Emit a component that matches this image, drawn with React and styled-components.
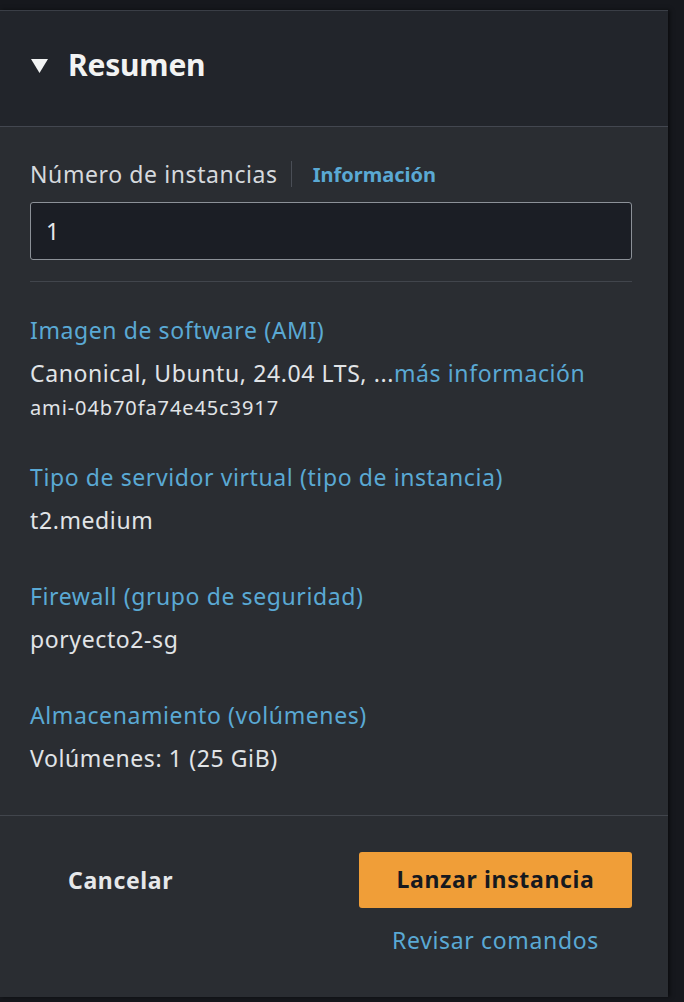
import React from "react";
import styled, { createGlobalStyle } from "styled-components";

const GlobalStyle = createGlobalStyle`
  html, body { margin: 0; padding: 0; background: #16181d; }
  body { font-family: "Noto Sans", "Open Sans", sans-serif; -webkit-font-smoothing: antialiased; }
  * { box-sizing: border-box; }
`;

const Page = styled.div`
  width: 684px;
  height: 1002px;
  padding-top: 10px;
  background: #16181d;
  overflow: hidden;
`;

const Panel = styled.section`
  width: 668px;
  height: 987px;
  background: #2a2d32;
  border-top: 1px solid #3a3e46;
  box-shadow: 2px 0 4px rgba(0, 0, 0, 0.5);
  display: flex;
  flex-direction: column;
`;

const Header = styled.header`
  height: 116px;
  background: #22252b;
  border-bottom: 1px solid #434750;
  display: flex;
  align-items: center;
  gap: 20px;
  padding: 0 0 8px 31px;
`;

const Caret = styled.svg`
  width: 17px;
  height: 14px;
  flex: none;
  margin-top: 2px;
`;

const Title = styled.h2`
  margin: 0;
  font-size: 30px;
  font-weight: 700;
  color: #f2f3f3;
  letter-spacing: -0.2px;
`;

const Body = styled.div`
  flex: 1;
  padding: 32px 36px 0 30px;
  display: flex;
  flex-direction: column;
  letter-spacing: 0.6px;
`;

const LabelRow = styled.div`
  display: flex;
  align-items: center;
  height: 30px;
`;

const Label = styled.span`
  font-size: 23px;
  color: #d5d9dd;
`;

const Sep = styled.span`
  width: 1px;
  height: 26px;
  background: #4a4e56;
  margin: 0 21px 0 13px;
`;

const InfoLink = styled.a`
  font-size: 20px;
  font-weight: 700;
  letter-spacing: 0;
  color: #5aa9d4;
  text-decoration: none;
`;

const Input = styled.div`
  margin-top: 13px;
  height: 58px;
  border: 1px solid #8c9198;
  border-radius: 3px;
  background: #1b1e25;
  display: flex;
  align-items: center;
  padding-left: 15px;
  font-size: 23px;
  color: #e6e8ea;
`;

const Divider = styled.hr`
  margin: 21px 0 0;
  border: 0;
  border-top: 1px solid #41454c;
`;

const Group = styled.div`
  display: flex;
  flex-direction: column;
  margin-top: ${(p) => p.$top}px;
`;

const Key = styled.span`
  font-size: 23px;
  line-height: 30px;
  color: #5aa9d4;
`;

const Value = styled.span`
  font-size: 23px;
  line-height: 30px;
  margin-top: 13px;
  color: #e1e4e7;
`;

const Inline = styled.span`
  color: #5aa9d4;
`;

const SubValue = styled.span`
  font-size: 20px;
  line-height: 26px;
  letter-spacing: 0.9px;
  margin-top: 7px;
  color: #e1e4e7;
`;

const Footer = styled.footer`
  height: 182px;
  border-top: 1px solid #41454c;
  display: grid;
  grid-template-columns: 1fr auto;
  padding: 36px 36px 0 68px;
  row-gap: 18px;
  align-content: start;
  letter-spacing: 0.65px;
`;

const Cancel = styled.button`
  background: none;
  border: 0;
  padding: 0;
  justify-self: start;
  align-self: center;
  font-family: inherit;
  letter-spacing: inherit;
  font-size: 23px;
  font-weight: 700;
  color: #e6e8ea;
  height: 54px;
`;

const Primary = styled.button`
  width: 273px;
  height: 56px;
  border: 0;
  border-radius: 3px;
  background: #f09e38;
  color: #16191f;
  font-family: inherit;
  letter-spacing: inherit;
  font-size: 23px;
  font-weight: 700;
  padding: 0 0 2px;
`;

const Review = styled.a`
  grid-column: 2;
  justify-self: center;
  font-size: 23px;
  line-height: 30px;
  margin-top: -1px;
  color: #5aa9d4;
  text-decoration: none;
`;

export default function App() {
  return (
    <>
      <GlobalStyle />
      <Page>
        <Panel>
          <Header>
            <Caret viewBox="0 0 17 14">
              <path d="M0 0 H17 L8.5 14 Z" fill="#f2f3f3" />
            </Caret>
            <Title>Resumen</Title>
          </Header>
          <Body>
            <LabelRow>
              <Label>Número de instancias</Label>
              <Sep />
              <InfoLink>Información</InfoLink>
            </LabelRow>
            <Input>1</Input>
            <Divider />
            <Group $top={33}>
              <Key>Imagen de software (AMI)</Key>
              <Value>
                Canonical, Ubuntu, 24.04 LTS, ...<Inline>más información</Inline>
              </Value>
              <SubValue>ami-04b70fa74e45c3917</SubValue>
            </Group>
            <Group $top={41}>
              <Key>Tipo de servidor virtual (tipo de instancia)</Key>
              <Value>t2.medium</Value>
            </Group>
            <Group $top={46}>
              <Key>Firewall (grupo de seguridad)</Key>
              <Value>poryecto2-sg</Value>
            </Group>
            <Group $top={46}>
              <Key>Almacenamiento (volúmenes)</Key>
              <Value>Volúmenes: 1 (25 GiB)</Value>
            </Group>
          </Body>
          <Footer>
            <Cancel>Cancelar</Cancel>
            <Primary>Lanzar instancia</Primary>
            <Review>Revisar comandos</Review>
          </Footer>
        </Panel>
      </Page>
    </>
  );
}
